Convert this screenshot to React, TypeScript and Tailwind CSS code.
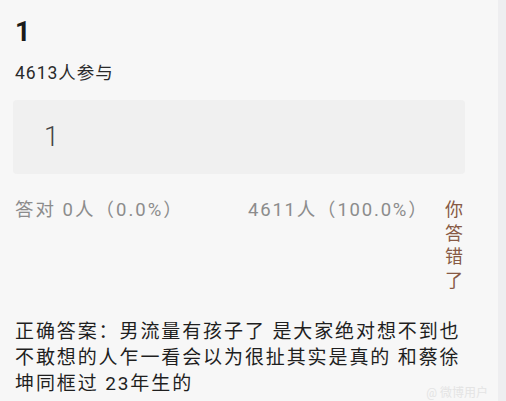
export default function App() {
  return (
    <div
      className="flex h-[401px] w-[506px] overflow-hidden"
      style={{ fontFamily: 'Roboto, "Noto Sans CJK SC", sans-serif' }}
    >
      <div className="relative w-[498px] shrink-0 bg-[#f7f7f7] pl-[15px] pt-[14px]">
        {/* title */}
        <div className="text-[27px] font-bold leading-[36px] text-[#1a1a1a]">1</div>
        <div className="mt-[11px] text-[17.5px] leading-[24px] tracking-[1px] text-[#2a2a2a]">4613人参与</div>

        {/* chosen option */}
        <div className="ml-[-2px] mt-[15px] flex h-[74px] w-[452px] items-center rounded-[4px] bg-[#f0f0f0] pl-[31px]">
          <span className="text-[27px] font-light text-[#444]">1</span>
        </div>

        {/* stats */}
        <div className="mt-[24px] flex">
          <div className="w-[233px] text-[18.5px] leading-[24px] tracking-[2px] text-[#8c8c8c]">答对 0人（0.0%）</div>
          <div className="w-[197px] text-[18.5px] leading-[24px] tracking-[1.8px] text-[#8c8c8c]">4611人（100.0%）</div>
          <div className="flex w-[22px] flex-col text-[18px] leading-[23.5px] text-[#875a45]">
            <span>你</span>
            <span>答</span>
            <span>错</span>
            <span>了</span>
          </div>
        </div>

        {/* answer */}
        <div className="mt-[27px] text-[19px] leading-[26px] tracking-[1.9px] text-[#1f1f1f]">
          正确答案：男流量有孩子了 是大家绝对想不到也
          <br />
          不敢想的人乍一看会以为很扯其实是真的 和蔡徐
          <br />
          坤同框过 23年生的
        </div>

        <div className="absolute bottom-[1px] right-[10px] text-[12px] leading-[14px] text-[#e4e4e4]">@ 微博用户</div>
      </div>
      <div className="flex-1 bg-[#eeeef0]" />
    </div>
  )
}
